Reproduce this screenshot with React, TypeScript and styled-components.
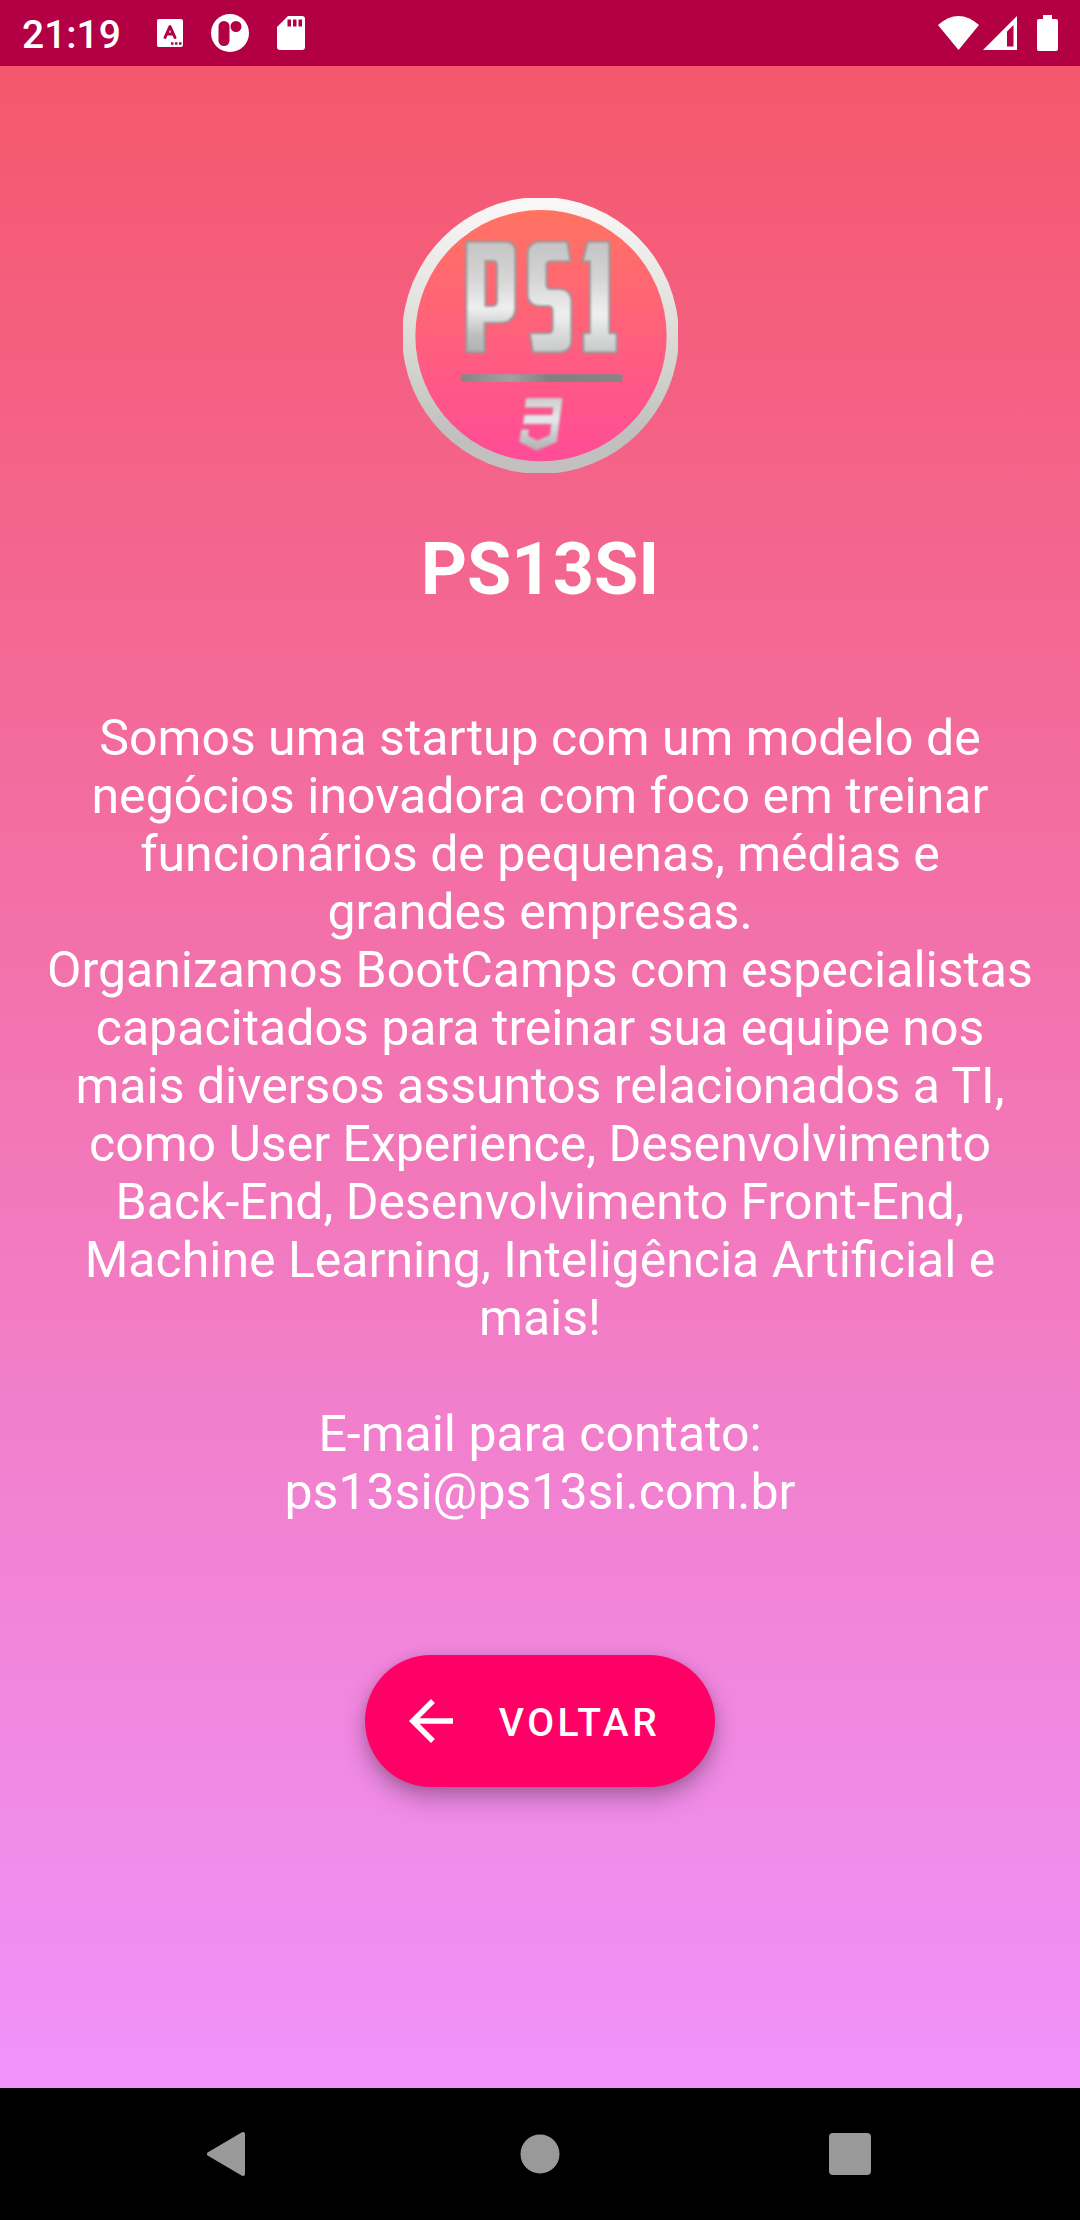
import React from "react";
import styled, { createGlobalStyle } from "styled-components";

const Global = createGlobalStyle`
  * { box-sizing: border-box; }
  body { margin: 0; background: #000; font-family: Roboto, "Noto Sans", sans-serif; }
`;

const Screen = styled.div`
  display: flex;
  flex-direction: column;
  min-height: 100vh;
  color: #fff;
`;

const StatusBar = styled.header`
  display: flex;
  align-items: center;
  justify-content: space-between;
  height: 66px;
  padding: 0 22px;
  background: #b30045;
`;

const Group = styled.div<{ $gap: number }>`
  display: flex;
  align-items: center;
  gap: ${(p) => p.$gap}px;
`;

const Clock = styled.time`
  margin-right: 8px;
  padding-top: 3px;
  font-size: 39px;
  font-weight: 500;
  line-height: 46px;
`;

const Content = styled.main`
  flex: 1;
  display: flex;
  flex-direction: column;
  align-items: center;
  padding: 132px 46px 88px;
  background: linear-gradient(180deg, #f5576c, #f093fb);
`;

const Title = styled.h1`
  margin: 55px 0 97px;
  font-size: 72px;
  font-weight: 700;
  line-height: 84px;
`;

const Text = styled.p`
  margin: 0;
  font-size: 50px;
  line-height: 58px;
  text-align: center;
`;

const Contact = styled(Text)`
  margin: 58px 0 134px;
`;

const BackButton = styled.button`
  display: flex;
  align-items: center;
  gap: 35px;
  height: 132px;
  padding: 0 55px 0 33px;
  border: 0;
  border-radius: 66px;
  background: #ff0066;
  color: #fff;
  font-family: inherit;
  font-size: 39px;
  font-weight: 500;
  letter-spacing: 0.09em;
  text-transform: uppercase;
  box-shadow: 0 12px 24px rgba(0, 0, 0, 0.26), 0 2px 12px rgba(0, 0, 0, 0.12);
  cursor: pointer;
`;

const ButtonLabel = styled.span`
  padding-top: 3px;
  line-height: 46px;
`;

const NavBar = styled.nav`
  display: flex;
  align-items: center;
  justify-content: space-around;
  height: 132px;
  padding: 0 7%;
  background: #000;
`;

const NavButton = styled.button`
  display: flex;
  justify-content: center;
  width: 88px;
  padding: 0;
  border: 0;
  background: none;
  color: #999;
  cursor: pointer;
`;

function Logo() {
  return (
    <svg width="275" height="275" viewBox="39 54 825 825" role="img" aria-label="PS13SI">
      <defs>
        <linearGradient id="ring" x1="0" y1="0" x2="0" y2="1">
          <stop offset="0" stopColor="#fbf8f8" />
          <stop offset="0.5" stopColor="#dcdcd6" />
          <stop offset="0.85" stopColor="#c0c0be" />
          <stop offset="1" stopColor="#c2c0c0" />
        </linearGradient>
        <linearGradient id="disc" x1="0" y1="0" x2="0" y2="1">
          <stop offset="0" stopColor="#ff7361" />
          <stop offset="1" stopColor="#ff4c97" />
        </linearGradient>
        <linearGradient id="steel" gradientUnits="userSpaceOnUse" x1="0" y1="182" x2="0" y2="520">
          <stop offset="0" stopColor="#c4c4c4" />
          <stop offset="0.3" stopColor="#d2d2d2" />
          <stop offset="0.65" stopColor="#efefef" />
          <stop offset="1" stopColor="#c6c8c8" />
        </linearGradient>
        <linearGradient id="steelP" gradientUnits="userSpaceOnUse" x1="0" y1="182" x2="0" y2="520">
          <stop offset="0" stopColor="#c4c4c4" />
          <stop offset="0.35" stopColor="#d6d6d6" />
          <stop offset="0.6" stopColor="#efefef" />
          <stop offset="0.85" stopColor="#bcbcbc" />
          <stop offset="1" stopColor="#b0b2b2" />
        </linearGradient>
        <linearGradient id="bar" x1="0" y1="0" x2="1" y2="0">
          <stop offset="0" stopColor="#858585" />
          <stop offset="0.3" stopColor="#a0a2a2" />
          <stop offset="0.55" stopColor="#808080" />
          <stop offset="1" stopColor="#868686" />
        </linearGradient>
        <linearGradient id="three" x1="0" y1="0" x2="0" y2="1">
          <stop offset="0" stopColor="#cfcfcf" />
          <stop offset="0.4" stopColor="#e8e6e8" />
          <stop offset="1" stopColor="#b0b0b0" />
        </linearGradient>
        <filter id="soft" x="-10%" y="-10%" width="120%" height="120%">
          <feGaussianBlur stdDeviation="3" />
        </filter>
        <filter id="softBar" x="-5%" y="-50%" width="110%" height="200%">
          <feGaussianBlur stdDeviation="2" />
        </filter>
      </defs>
      <circle cx="451.5" cy="466.5" r="415" fill="url(#ring)" />
      <circle cx="453" cy="467" r="377" fill="url(#disc)" />
      <g filter="url(#soft)" stroke="#96999a" strokeWidth="6" strokeLinejoin="round">
        <path fill="url(#steelP)" fillRule="evenodd" d="M229 185H345Q376 185 376 216V382Q376 428 330 428H284V517H229ZM286 243V378H308Q321 378 321 364V257Q321 243 308 243Z" />
        <path fill="url(#steel)" d="M532 185H452Q413 185 413 224V340Q413 378 451 378H473Q488 378 488 393V445Q488 460 473 460H420L429 517H505Q544 517 544 478V366Q544 327 505 327H482Q469 327 469 314V257Q469 244 482 244H541Z" />
        <path fill="url(#steel)" d="M593 185H658V460H680V517H580V460H600V244H578Z" />
      </g>
      <rect x="214" y="583" width="483" height="23" fill="url(#bar)" filter="url(#softBar)" />
      <path fill="url(#three)" filter="url(#soft)" stroke="#bbb" strokeWidth="2" d="M409 655H517L500 785L440 811L389 785L394 749H416L414 768L442 782L480 766L484 732H399L404 705H487L490 682H405Z" />
    </svg>
  );
}

export default function App() {
  return (
    <Screen>
      <Global />
      <StatusBar>
        <Group $gap={28}>
          <Clock>21:19</Clock>
          <svg width="26" height="30" viewBox="0 0 26 30" aria-hidden="true">
            <rect y="1" width="26" height="28" rx="2" fill="#fff" />
            <path d="M8 19.500L13 8.500L18 19.500M10 16H16" fill="none" stroke="#b30045" strokeWidth="3" strokeLinecap="round" strokeLinejoin="round" />
            <path d="M14 25.500h2.500M18 25.500h2.500M22 25.500h2.500" stroke="#b30045" strokeWidth="2.500" />
          </svg>
          <svg width="38" height="38" viewBox="0 0 38 38" aria-hidden="true">
            <circle cx="19" cy="19" r="19" fill="#fff" />
            <rect x="7.500" y="7" width="11" height="25" rx="5.500" fill="#b30045" />
            <circle cx="25" cy="12.500" r="5.500" fill="#b30045" />
          </svg>
          <svg width="28" height="34" viewBox="0 0 28 34" aria-hidden="true">
            <path d="M11 0H25a3 3 0 0 1 3 3V31a3 3 0 0 1-3 3H3a3 3 0 0 1-3-3V11Z" fill="#fff" />
            <path d="M10.500 3.500h3.500v7h-3.500zM16 3.500h3.500v7h-3.500zM21.500 3.500h3.500v7h-3.500z" fill="#b30045" />
          </svg>
        </Group>
        <Group $gap={4}>
          <svg width="41" height="34" viewBox="0 0 41 34" aria-hidden="true">
            <path d="M0 9Q20.500-9 41 9L20.500 34Z" fill="#fff" />
          </svg>
          <svg width="34" height="34" viewBox="0 0 34 34" aria-hidden="true">
            <path fillRule="evenodd" d="M34 0V34H0ZM30.500 9L24 15.500V30.500H30.500Z" fill="#fff" />
          </svg>
          <svg width="37" height="36" viewBox="0 0 37 36" aria-hidden="true">
            <path d="M22 0h9v4h4a2 2 0 0 1 2 2v28a2 2 0 0 1-2 2H18a2 2 0 0 1-2-2V6a2 2 0 0 1 2-2h4Z" fill="#fff" />
          </svg>
        </Group>
      </StatusBar>
      <Content>
        <Logo />
        <Title>PS13SI</Title>
        <Text>
          Somos uma startup com um modelo de negócios inovadora com foco em treinar funcionários de pequenas, médias e
          grandes empresas.
          <br />
          Organizamos BootCamps com especialistas capacitados para treinar sua equipe nos mais diversos assuntos
          relacionados a TI, como User Experience, Desenvolvimento Back-End, Desenvolvimento Front-End, Machine
          Learning, Inteligência Artificial e mais!
        </Text>
        <Contact>
          E-mail para contato:
          <br />
          ps13si@ps13si.com.br
        </Contact>
        <BackButton type="button">
          <svg width="66" height="66" viewBox="0 0 24 24" aria-hidden="true">
            <path d="M20 11H7.830l5.590-5.590L12 4l-8 8 8 8 1.410-1.410L7.830 13H20z" fill="#fff" />
          </svg>
          <ButtonLabel>Voltar</ButtonLabel>
        </BackButton>
      </Content>
      <NavBar aria-label="Sistema">
        <NavButton type="button" aria-label="Voltar">
          <svg width="46" height="46" viewBox="0 0 46 46" aria-hidden="true">
            <path d="M36 3V43L2 23Z" fill="currentColor" stroke="currentColor" strokeWidth="4" strokeLinejoin="round" />
          </svg>
        </NavButton>
        <NavButton type="button" aria-label="Início">
          <svg width="40" height="40" viewBox="0 0 40 40" aria-hidden="true">
            <circle cx="20" cy="20" r="19.500" fill="currentColor" />
          </svg>
        </NavButton>
        <NavButton type="button" aria-label="Recentes">
          <svg width="42" height="42" viewBox="0 0 42 42" aria-hidden="true">
            <rect width="42" height="42" rx="4" fill="currentColor" />
          </svg>
        </NavButton>
      </NavBar>
    </Screen>
  );
}
